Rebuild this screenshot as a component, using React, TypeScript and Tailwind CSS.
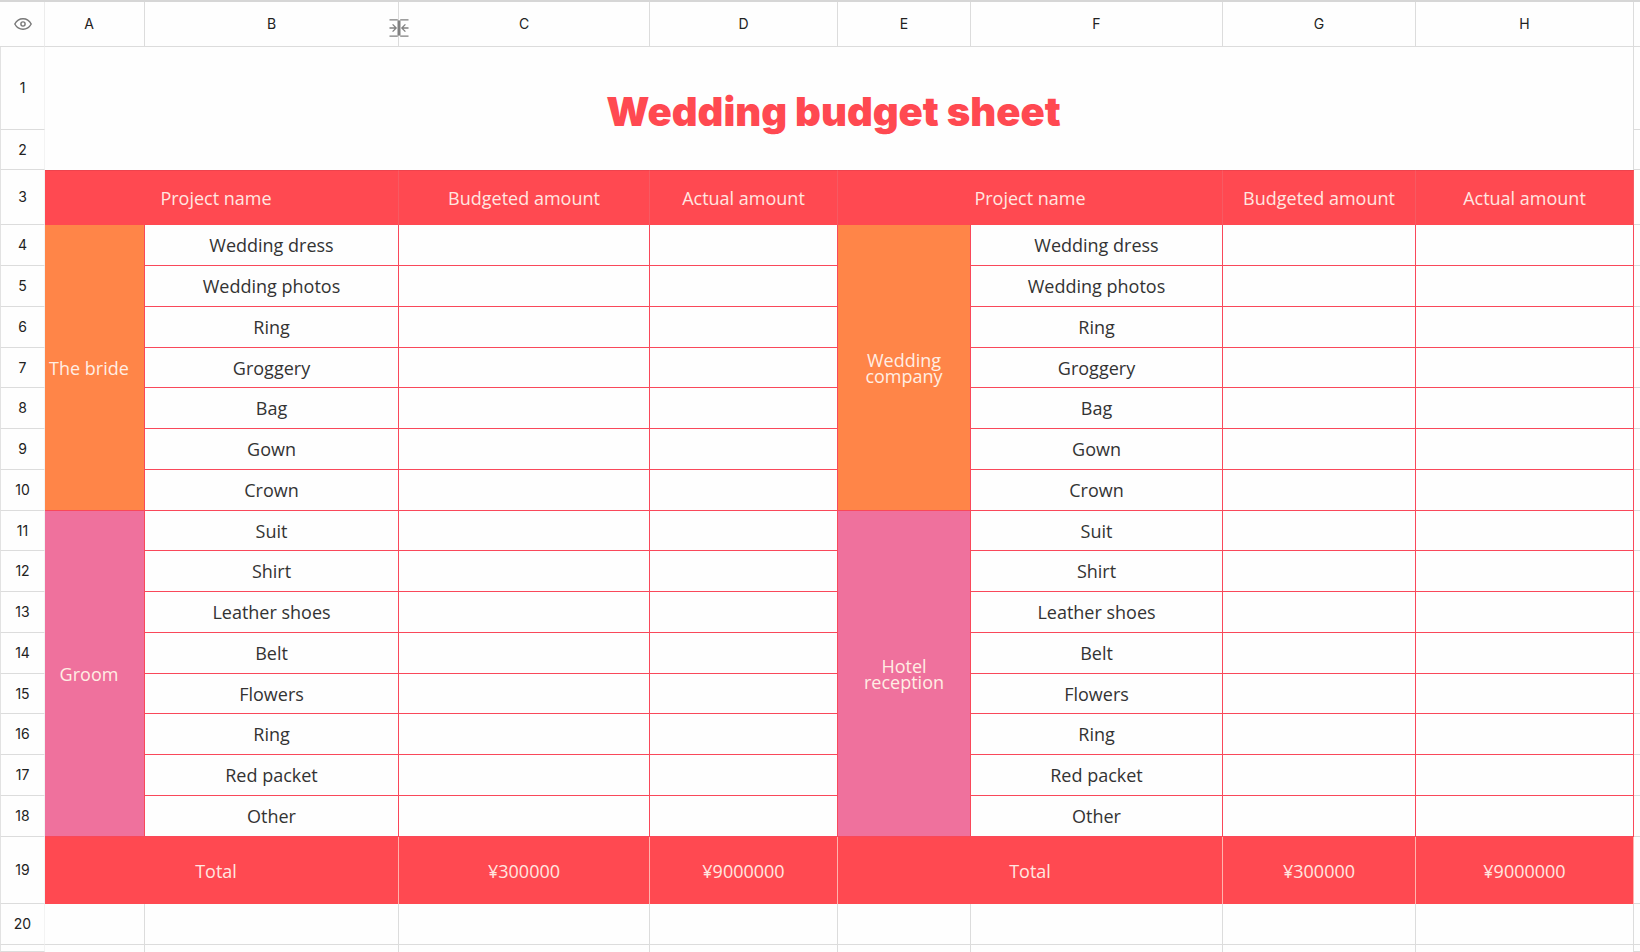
import { clsx } from 'clsx';

const columns: { name: string; width: string }[] = [
  { name: 'A', width: 'w-[100px]' },
  { name: 'B', width: 'w-[254px]' },
  { name: 'C', width: 'w-[251px]' },
  { name: 'D', width: 'w-[188px]' },
  { name: 'E', width: 'w-[133px]' },
  { name: 'F', width: 'w-[252px]' },
  { name: 'G', width: 'w-[193px]' },
  { name: 'H', width: 'w-[218px]' },
];

const items = [
  'Wedding dress',
  'Wedding photos',
  'Ring',
  'Groggery',
  'Bag',
  'Gown',
  'Crown',
  'Suit',
  'Shirt',
  'Leather shoes',
  'Belt',
  'Flowers',
  'Ring',
  'Red packet',
  'Other',
];

// Merged category cells, keyed by the item index they start on
const groups: Record<number, { left: string; right: string; span: number; color: string }> = {
  0: { left: 'The bride', right: 'Wedding company', span: 7, color: 'bg-[#ff8548]' },
  7: { left: 'Groom', right: 'Hotel reception', span: 8, color: 'bg-[#ef719d]' },
};

const itemCell = 'border-b border-r border-[#f9485a] p-0 text-center';
const headCell = 'border-r border-t border-r-[#f75a62] border-t-[#ee434d] bg-[#ff4951] p-0 font-normal text-[#ffe6e0]';
const totalCell = 'border-r border-[#ffb3ad] bg-[#ff4951] p-0 text-center text-[#ffe6e0]';

function EyeIcon() {
  return (
    <svg width="18" height="12" viewBox="0 0 18 12" fill="none" stroke="#777" strokeWidth="1.4">
      <path d="M.8 6C2.6 2.6 5.6.8 9 .8S15.4 2.6 17.2 6C15.4 9.4 12.4 11.2 9 11.2S2.6 9.4.8 6Z" />
      <circle cx="9" cy="6" r="2.1" />
    </svg>
  );
}

function ResizeIcon() {
  return (
    <svg width="20" height="18" viewBox="0 0 20 18" fill="none" stroke="#808080" strokeWidth="1.3">
      <path d="M.5 .8H8.8M11.2 .8H19.5M.5 17.2H8.8M11.2 17.2H19.5" />
      <path d="M10 1.4V16.6" strokeWidth="3" />
      <path d="M.5 9H7.2M3.6 5.4L7.2 9L3.6 12.6M19.5 9H12.8M16.4 5.4L12.8 9L16.4 12.6" />
    </svg>
  );
}

function RowHeader({ n }: { n?: number }) {
  return (
    <th
      scope="row"
      className="border-b border-l border-r border-b-[#dcdcdc] border-l-[#e2e2e2] border-r-[#f3f3f3] p-0 font-['Inter',sans-serif] text-sm font-normal leading-4 text-[#222]"
    >
      {n}
    </th>
  );
}

// Sliver of the next column at the right edge of the window
function EdgeCell() {
  return <td className="border-b border-[#dcdcdc] p-0" />;
}

function EmptyRow({ n, height }: { n?: number; height: string }) {
  return (
    <tr className={height}>
      <RowHeader n={n} />
      {columns.map((c) => (
        <td key={c.name} className={clsx('border-r border-[#dcdcdc] p-0', n && 'border-b')} />
      ))}
      <EdgeCell />
    </tr>
  );
}

export default function App() {
  return (
    <main className="overflow-hidden border-t-2 border-[#d6d6d6] bg-[#fefefe]">
      <table className="w-full table-fixed border-separate border-spacing-0 font-['Open_Sans',sans-serif] text-lg leading-4 text-[#333]">
        <colgroup>
          <col className="w-[45px]" />
          {columns.map((c) => (
            <col key={c.name} className={c.width} />
          ))}
          <col />
        </colgroup>
        <thead>
          <tr className="h-[45px] font-['Inter',sans-serif] text-sm">
            <th className="border-b border-r border-b-[#dcdcdc] border-r-[#ececec] p-0">
              <button type="button" aria-label="Show or hide" className="block pl-[14px]">
                <EyeIcon />
              </button>
            </th>
            {columns.map((c) => (
              <th
                key={c.name}
                scope="col"
                className={clsx(
                  'relative border-b border-r border-[#dcdcdc] p-0 font-normal text-[#222]',
                  c.name === 'A' && 'pr-[11px]',
                )}
              >
                {c.name}
                {c.name === 'B' && (
                  <span className="absolute -right-[11px] top-[17px] z-10">
                    <ResizeIcon />
                  </span>
                )}
              </th>
            ))}
            <td className="border-b border-[#dcdcdc] p-0" />
          </tr>
        </thead>
        <tbody>
          <tr className="h-[83px]">
            <RowHeader n={1} />
            <td colSpan={8} rowSpan={2} className="border-r border-[#dcdcdc] p-0 pr-[11px] text-center">
              <h1 className="pt-1.5 font-['Inter',sans-serif] text-[40px] font-black leading-10 text-[#ff4951]">
                Wedding budget sheet
              </h1>
            </td>
            <EdgeCell />
          </tr>
          <tr className="h-10">
            <RowHeader n={2} />
            <EdgeCell />
          </tr>
          <tr className="h-[55px]">
            <RowHeader n={3} />
            <th scope="col" colSpan={2} className={clsx(headCell, 'pr-[11px]')}>
              Project name
            </th>
            <th scope="col" className={headCell}>Budgeted amount</th>
            <th scope="col" className={headCell}>Actual amount</th>
            <th scope="col" colSpan={2} className={headCell}>
              Project name
            </th>
            <th scope="col" className={headCell}>Budgeted amount</th>
            <th scope="col" className={headCell}>Actual amount</th>
            <EdgeCell />
          </tr>
          {items.map((item, i) => {
            const group = groups[i];
            return (
              <tr key={i} className={i % 4 === 3 ? 'h-10' : 'h-[41px]'}>
                <RowHeader n={i + 4} />
                {group && (
                  <td
                    rowSpan={group.span}
                    className={clsx(itemCell, group.color, 'whitespace-nowrap pr-[11px] text-[#ffeee4]')}
                  >
                    {group.left}
                  </td>
                )}
                <td className={itemCell}>{item}</td>
                <td className={itemCell} />
                <td className={itemCell} />
                {group && (
                  <td rowSpan={group.span} className={clsx(itemCell, group.color, 'px-4 text-[#ffeee4]')}>
                    {group.right}
                  </td>
                )}
                <td className={itemCell}>{item}</td>
                <td className={itemCell} />
                <td className={itemCell} />
                <EdgeCell />
              </tr>
            );
          })}
          <tr className="h-[67px]">
            <RowHeader n={19} />
            <td colSpan={2} className={clsx(totalCell, 'pr-[11px]')}>Total</td>
            <td className={totalCell}>¥300000</td>
            <td className={totalCell}>¥9000000</td>
            <td colSpan={2} className={totalCell}>Total</td>
            <td className={totalCell}>¥300000</td>
            <td className={totalCell}>¥9000000</td>
            <EdgeCell />
          </tr>
          <EmptyRow n={20} height="h-[41px]" />
          <EmptyRow height="h-[7px]" />
        </tbody>
      </table>
    </main>
  );
}
